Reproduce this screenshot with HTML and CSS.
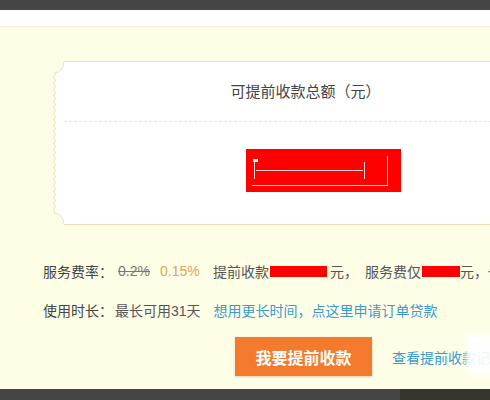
FILE: index.html
```html
<!DOCTYPE html>
<html>
  <head>
    <meta charset="UTF-8">
    <title>提前收款</title>
    <link rel="stylesheet" href="styles.css">
  </head>
  <body>
    <div class="topbar"></div>
    <div class="nav"></div>
    <div class="main">
      <div class="ticket">
        <svg class="ticket-edge" width="12" height="164" viewBox="0 0 12 164">
          <path fill="#fff" d="M12 0.5 A11 11 0 0 1 2.5 12 L2.5 152 A11 11 0 0 1 12 163.5 Z"/>
          <path fill="none" stroke="#e8e0b8" stroke-width="1" d="M12 0.5 A11 11 0 0 1 2.5 12 q2 1.5 0 3q-2 1.5 0 3q2 1.5 0 3q-2 1.5 0 3q2 1.5 0 3q-2 1.5 0 3q2 1.5 0 3q-2 1.5 0 3q2 1.5 0 3q-2 1.5 0 3q2 1.5 0 3q-2 1.5 0 3q2 1.5 0 3q-2 1.5 0 3q2 1.5 0 3q-2 1.5 0 3q2 1.5 0 3q-2 1.5 0 3q2 1.5 0 3q-2 1.5 0 3q2 1.5 0 3q-2 1.5 0 3q2 1.5 0 3q-2 1.5 0 3q2 1.5 0 3q-2 1.5 0 3q2 1.5 0 3q-2 1.5 0 3q2 1.5 0 3q-2 1.5 0 3q2 1.5 0 3q-2 1.5 0 3q2 1.5 0 3q-2 1.5 0 3q2 1.5 0 3q-2 1.5 0 3q2 1.5 0 3q-2 1.5 0 3q2 1.5 0 3q-2 1.5 0 3q2 1.5 0 3q-2 1.5 0 3q2 1.5 0 3q-2 1.5 0 3q2 1.5 0 3q-2 1.5 0 3 L2.5 152 A11 11 0 0 1 12 163.5"/>
        </svg>
        <div class="ticket-body">
          <div class="ticket-title">可提前收款总额（元）</div>
          <div class="ticket-amount">
            <div class="masked">
              <svg width="155" height="43" viewBox="0 0 155 43">
                <g fill="none" stroke="#ffd6d6" stroke-width="1">
                  <path d="M8.5 12 V30"/>
                  <path d="M10 21.5 H117"/>
                  <path d="M118.5 13 V30"/>
                  <path d="M6 36.5 H142"/>
                  <path d="M141.5 7 V36"/>
                </g>
                <rect x="7" y="10" width="5" height="3" fill="#fff"/>
              </svg>
            </div>
          </div>
        </div>
      </div>

      <div class="info">
        <div class="info-row">
          <span class="label">服务费率：</span>
          <span class="rate-old">0.2%</span>
          <span class="rate-new">0.15%</span>
          <span>提前收款</span><span class="masked-inline wide"></span><span class="after">元，</span>
          <span class="fee">服务费仅</span><span class="masked-inline"></span><span>元，一</span>
        </div>
        <div class="info-row">
          <span class="label">使用时长：</span>
          <span>最长可用31天</span>
          <a class="link loan-link" href="#">想用更长时间，点这里申请订单贷款</a>
        </div>
      </div>

      <div class="actions">
        <button class="btn-primary" type="button">我要提前收款</button>
        <a class="link record-link" href="#">查看提前收款记录</a>
        <div class="glare"></div>
      </div>
    </div>
    <div class="footer">
      <div class="footer-left"></div>
      <div class="footer-right"></div>
    </div>
  </body>
</html>
```

FILE: styles.css
```css
body {
	margin: 0;
	padding: 0;
	width: 490px;
	height: 400px;
	overflow: hidden;
	background-color: #fefee6;
	font-family: "Liberation Sans", "Noto Sans CJK SC", sans-serif;
	font-size: 14px;
	color: #555;
}

.topbar {
	height: 10px;
	background-color: #454545;
}

.nav {
	height: 16px;
	background-color: #fff;
	border-bottom: 1px solid #efefe4;
}

.main {
	height: 362px;
	padding-top: 34px;
	box-sizing: border-box;
	position: relative;
}

.ticket {
	display: flex;
	margin-left: 52px;
	width: 496px;
	height: 164px;
}

.ticket-edge {
	display: block;
	flex: none;
}

.ticket-body {
	flex: 1;
	background-color: #fff;
	border: 1px solid #e8e0b8;
	border-left: none;
}

.ticket-title {
	height: 59px;
	line-height: 59px;
	text-align: center;
	font-size: 15px;
	color: #444;
	border-bottom: 1px dashed #ece6c8;
}

.ticket-amount {
	padding-top: 27px;
	padding-left: 182px;
}

.masked {
	width: 155px;
	height: 43px;
	background-color: #f00;
}

.masked svg {
	display: block;
}

.info {
	margin-top: 36px;
	padding-left: 43px;
}

.info-row {
	display: flex;
	align-items: center;
	height: 20px;
	white-space: nowrap;
	margin-bottom: 19px;
}

.info-row > * {
	flex: none;
}

.label {
	width: 72px;
	color: #444;
}

.rate-old {
	width: 42px;
	margin-left: 3px;
	color: #777;
	text-decoration: line-through;
}

.rate-new {
	width: 53px;
	color: #e0a35a;
}

.masked-inline {
	display: inline-block;
	width: 38px;
	height: 11px;
	margin-left: 1px;
	background-color: #f00;
}

.masked-inline.wide {
	width: 57px;
}

.after {
	margin-left: 3px;
}

.fee {
	margin-left: 7px;
}

.link {
	color: #3a9ad2;
	text-decoration: none;
}

.loan-link {
	margin-left: 13px;
}

.actions {
	display: flex;
	align-items: center;
	padding-left: 235px;
	margin-top: -2px;
}

.btn-primary {
	flex: none;
	width: 137px;
	height: 39px;
	border: none;
	background-color: #f47a2e;
	color: #fff;
	font-family: inherit;
	font-size: 16px;
	font-weight: bold;
	box-shadow: 0 1px 2px rgba(120, 60, 0, 0.25);
}

.record-link {
	flex: none;
	margin-left: 20px;
	font-size: 14px;
	white-space: nowrap;
}

.glare {
	position: absolute;
	left: 466px;
	top: 308px;
	width: 30px;
	height: 40px;
	background-color: #fff;
	opacity: 0.9;
	filter: blur(2px);
}

.footer {
	display: flex;
	height: 11px;
}

.footer-left {
	width: 400px;
	background-color: #454545;
}

.footer-right {
	flex: 1;
	background-color: #3a3431;
}
```
